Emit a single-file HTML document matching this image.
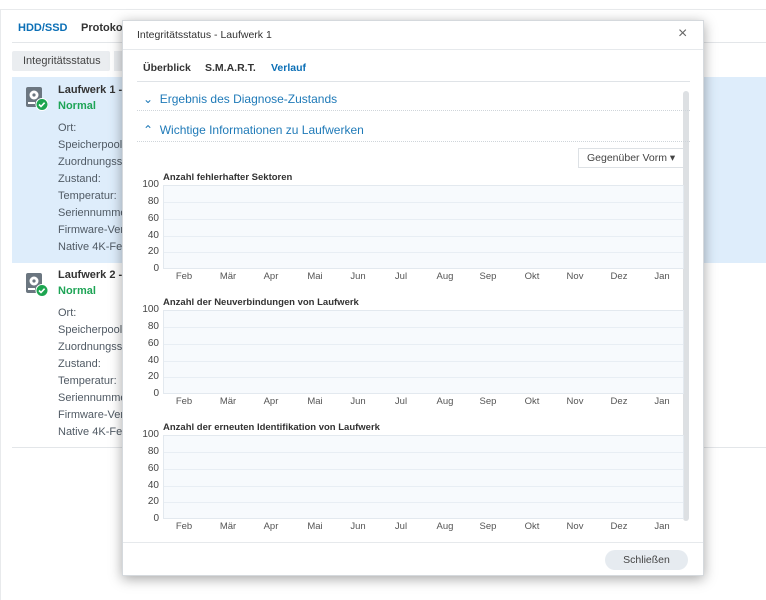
<!DOCTYPE html>
<html><head><meta charset="utf-8"><style>
*{margin:0;padding:0;box-sizing:border-box}
body{width:766px;height:600px;overflow:hidden;background:#fff;font-family:"Liberation Sans","DejaVu Sans",sans-serif;position:relative;color:#333}
.a{position:absolute;white-space:nowrap}
.lbl{font-size:11px;color:#505a64}
.dlg{position:absolute;left:122px;top:20px;width:582px;height:556px;background:#fff;box-shadow:0 3px 12px rgba(0,0,0,.35);border:1px solid #d5d9dd}
.ct{font-size:9.5px;font-weight:bold;color:#333}
.yl{font-size:10px;color:#444;width:30px;text-align:right}
.ml{font-size:9.5px;color:#555;width:30px;text-align:center}
.plot{position:absolute;left:40px;width:521px;height:84px;background:#f7fafd;border:1px solid #e3e9ef}
.plot i{position:absolute;left:0;right:0;height:1px;background:#e8eef4}
</style></head><body>
<div class="a" style="left:0;top:9px;width:766px;height:1px;background:#e8eaec"></div>
<div class="a" style="left:18px;top:22px;font-size:11px;font-weight:bold;color:#0b6fb6">HDD/SSD</div>
<div class="a" style="left:81px;top:22px;font-size:11px;font-weight:bold;color:#333">Protokol</div>
<div class="a" style="left:12px;top:42px;width:754px;height:1px;background:#e3e6e9"></div>
<div class="a" style="left:12px;top:51px;width:98px;height:20px;background:#eaedf0;border-radius:2px;font-size:11px;color:#444;padding:4px 0 0 11px">Integritätsstatus</div>
<div class="a" style="left:114px;top:51px;width:10px;height:20px;background:#eaedf0"></div>
<div class="a" style="left:12px;top:77px;width:754px;height:186px;background:#deedfb"></div>
<div class="a" style="left:12px;top:447px;width:754px;height:1px;background:#e3e6e9"></div>
<div class="a" style="left:0;top:10px;width:1px;height:590px;background:#e8eaec"></div>

<!-- drive icons -->
<svg class="a" style="left:26px;top:87px" width="22" height="24" viewBox="0 0 22 24"><rect x="0" y="0" width="16" height="20" rx="2" fill="#6b7680"/><circle cx="8" cy="8" r="4.5" fill="#fff"/><circle cx="8" cy="8" r="1.6" fill="#6b7680"/><rect x="2" y="15" width="7" height="2" fill="#fff"/><circle cx="16" cy="17.5" r="6" fill="#1da550" stroke="#fff" stroke-width="1"/><path d="M13 17.5l2 2 3.6-3.8" stroke="#fff" stroke-width="1.6" fill="none"/></svg>
<svg class="a" style="left:26px;top:273px" width="22" height="24" viewBox="0 0 22 24"><rect x="0" y="0" width="16" height="20" rx="2" fill="#6b7680"/><circle cx="8" cy="8" r="4.5" fill="#fff"/><circle cx="8" cy="8" r="1.6" fill="#6b7680"/><rect x="2" y="15" width="7" height="2" fill="#fff"/><circle cx="16" cy="17.5" r="6" fill="#1da550" stroke="#fff" stroke-width="1"/><path d="M13 17.5l2 2 3.6-3.8" stroke="#fff" stroke-width="1.6" fill="none"/></svg>

<div class="a" style="left:58px;top:84px;font-size:11px;font-weight:bold;color:#333">Laufwerk 1 -</div>
<div class="a" style="left:58px;top:100px;font-size:11px;font-weight:bold;color:#1ea456">Normal</div>
<div class="a lbl" style="left:58px;top:122px">Ort:</div>
<div class="a lbl" style="left:58px;top:139px">Speicherpool:</div>
<div class="a lbl" style="left:58px;top:156px">Zuordnungsst</div>
<div class="a lbl" style="left:58px;top:173px">Zustand:</div>
<div class="a lbl" style="left:58px;top:190px">Temperatur:</div>
<div class="a lbl" style="left:58px;top:207px">Seriennumme</div>
<div class="a lbl" style="left:58px;top:224px">Firmware-Vers</div>
<div class="a lbl" style="left:58px;top:241px">Native 4K-Fes</div>

<div class="a" style="left:58px;top:269px;font-size:11px;font-weight:bold;color:#333">Laufwerk 2 -</div>
<div class="a" style="left:58px;top:285px;font-size:11px;font-weight:bold;color:#1ea456">Normal</div>
<div class="a lbl" style="left:58px;top:307px">Ort:</div>
<div class="a lbl" style="left:58px;top:324px">Speicherpool:</div>
<div class="a lbl" style="left:58px;top:341px">Zuordnungsst</div>
<div class="a lbl" style="left:58px;top:358px">Zustand:</div>
<div class="a lbl" style="left:58px;top:375px">Temperatur:</div>
<div class="a lbl" style="left:58px;top:392px">Seriennumme</div>
<div class="a lbl" style="left:58px;top:409px">Firmware-Vers</div>
<div class="a lbl" style="left:58px;top:426px">Native 4K-Fes</div>

<div class="dlg">
<div class="a" style="left:14px;top:8px;font-size:10.5px;color:#333">Integritätsstatus - Laufwerk 1</div>
<div class="a" style="left:555px;top:4px;font-size:16px;color:#666">×</div>
<div class="a" style="left:0;top:28px;width:580px;height:1px;background:#e6e9ec"></div>
<div class="a" style="left:20px;top:41px;font-size:10.5px;font-weight:bold;color:#333">Überblick</div>
<div class="a" style="left:82px;top:41px;font-size:10.5px;font-weight:bold;color:#333">S.M.A.R.T.</div>
<div class="a" style="left:148px;top:41px;font-size:10.5px;font-weight:bold;color:#0b6fb6">Verlauf</div>
<div class="a" style="left:14px;top:60px;width:553px;height:1px;background:#dfe3e7"></div>
<div class="a" style="left:560px;top:70px;width:6px;height:430px;background:#dde0e3;border-radius:3px"></div>
<div class="a" style="left:20px;top:71px;font-size:12px;color:#1f7ab8">⌄&nbsp; Ergebnis des Diagnose-Zustands</div>
<div class="a" style="left:14px;top:89px;width:553px;border-top:1px dotted #cfd5da"></div>
<div class="a" style="left:20px;top:102px;font-size:12px;color:#1f7ab8">⌃&nbsp; Wichtige Informationen zu Laufwerken</div>
<div class="a" style="left:14px;top:120px;width:553px;border-top:1px dotted #cfd5da"></div>
<div class="a" style="left:455px;top:127px;width:106px;height:20px;border:1px solid #dde1e5;font-size:10.5px;color:#444;padding:3px 0 0 8px">Gegenüber Vorm ▾</div>

<div class="a" style="left:0;top:150px;width:570px;height:125px">
<div class="a ct" style="left:40px;top:1px">Anzahl fehlerhafter Sektoren</div>
<div class="plot" style="top:14px"><i style="top:16px"></i><i style="top:33px"></i><i style="top:50px"></i><i style="top:66px"></i></div>
<div class="a yl" style="left:6px;top:8px">100</div><div class="a yl" style="left:6px;top:25px">80</div><div class="a yl" style="left:6px;top:42px">60</div><div class="a yl" style="left:6px;top:59px">40</div><div class="a yl" style="left:6px;top:75px">20</div><div class="a yl" style="left:6px;top:92px">0</div>
<div class="a ml" style="left:46px;top:100px">Feb</div><div class="a ml" style="left:90px;top:100px">Mär</div><div class="a ml" style="left:133px;top:100px">Apr</div><div class="a ml" style="left:177px;top:100px">Mai</div><div class="a ml" style="left:220px;top:100px">Jun</div><div class="a ml" style="left:263px;top:100px">Jul</div><div class="a ml" style="left:307px;top:100px">Aug</div><div class="a ml" style="left:350px;top:100px">Sep</div><div class="a ml" style="left:394px;top:100px">Okt</div><div class="a ml" style="left:437px;top:100px">Nov</div><div class="a ml" style="left:481px;top:100px">Dez</div><div class="a ml" style="left:524px;top:100px">Jan</div>
</div>

<div class="a" style="left:0;top:275px;width:570px;height:125px">
<div class="a ct" style="left:40px;top:1px">Anzahl der Neuverbindungen von Laufwerk</div>
<div class="plot" style="top:14px"><i style="top:16px"></i><i style="top:33px"></i><i style="top:50px"></i><i style="top:66px"></i></div>
<div class="a yl" style="left:6px;top:8px">100</div><div class="a yl" style="left:6px;top:25px">80</div><div class="a yl" style="left:6px;top:42px">60</div><div class="a yl" style="left:6px;top:59px">40</div><div class="a yl" style="left:6px;top:75px">20</div><div class="a yl" style="left:6px;top:92px">0</div>
<div class="a ml" style="left:46px;top:100px">Feb</div><div class="a ml" style="left:90px;top:100px">Mär</div><div class="a ml" style="left:133px;top:100px">Apr</div><div class="a ml" style="left:177px;top:100px">Mai</div><div class="a ml" style="left:220px;top:100px">Jun</div><div class="a ml" style="left:263px;top:100px">Jul</div><div class="a ml" style="left:307px;top:100px">Aug</div><div class="a ml" style="left:350px;top:100px">Sep</div><div class="a ml" style="left:394px;top:100px">Okt</div><div class="a ml" style="left:437px;top:100px">Nov</div><div class="a ml" style="left:481px;top:100px">Dez</div><div class="a ml" style="left:524px;top:100px">Jan</div>
</div>

<div class="a" style="left:0;top:400px;width:570px;height:125px">
<div class="a ct" style="left:40px;top:1px">Anzahl der erneuten Identifikation von Laufwerk</div>
<div class="plot" style="top:14px"><i style="top:16px"></i><i style="top:33px"></i><i style="top:50px"></i><i style="top:66px"></i></div>
<div class="a yl" style="left:6px;top:8px">100</div><div class="a yl" style="left:6px;top:25px">80</div><div class="a yl" style="left:6px;top:42px">60</div><div class="a yl" style="left:6px;top:59px">40</div><div class="a yl" style="left:6px;top:75px">20</div><div class="a yl" style="left:6px;top:92px">0</div>
<div class="a ml" style="left:46px;top:100px">Feb</div><div class="a ml" style="left:90px;top:100px">Mär</div><div class="a ml" style="left:133px;top:100px">Apr</div><div class="a ml" style="left:177px;top:100px">Mai</div><div class="a ml" style="left:220px;top:100px">Jun</div><div class="a ml" style="left:263px;top:100px">Jul</div><div class="a ml" style="left:307px;top:100px">Aug</div><div class="a ml" style="left:350px;top:100px">Sep</div><div class="a ml" style="left:394px;top:100px">Okt</div><div class="a ml" style="left:437px;top:100px">Nov</div><div class="a ml" style="left:481px;top:100px">Dez</div><div class="a ml" style="left:524px;top:100px">Jan</div>
</div>

<div class="a" style="left:0;top:521px;width:580px;height:1px;background:#e6e9ec"></div>
<div class="a" style="left:482px;top:529px;width:83px;height:20px;background:#e6ebf0;border-radius:10px;font-size:10.5px;color:#444;text-align:center;padding-top:4px">Schließen</div>
</div>
</body></html>
